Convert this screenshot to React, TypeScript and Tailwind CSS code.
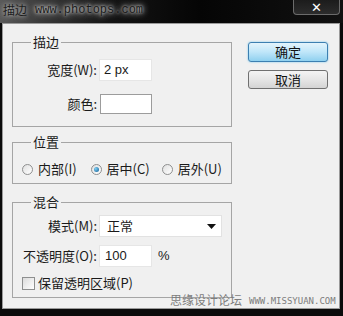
import React from "react";

const cn = '"Noto Sans CJK SC", "Liberation Sans", sans-serif';

function Radio({ checked, label }: { checked?: boolean; label: string }) {
  return (
    <div className="flex items-center gap-[5px]">
      <div className="w-[11px] h-[11px] rounded-full border border-[#8e8f8f] bg-gradient-to-br from-[#e0e0e0] to-[#ffffff] flex items-center justify-center">
        {checked && <div className="w-[5px] h-[5px] rounded-full bg-[radial-gradient(circle_at_35%_35%,#7fd0f5,#0f5a91)]" />}
      </div>
      <span className="text-[13px] leading-[16px] text-[#1a1a1a]">{label}</span>
    </div>
  );
}

export default function App() {
  return (
    <div
      className="relative w-[343px] h-[316px] overflow-hidden bg-[#0b0b0b] flex flex-col"
      style={{ fontFamily: cn }}
    >
      {/* title bar */}
      <div className="h-[23px] flex items-start bg-[linear-gradient(90deg,#5a5a5a_0px,#3a3a3a_40px,#141414_110px,#050505_200px,#111_343px)]">
        <span
          className="ml-[3px] mt-[3px] text-[12px] leading-[14px] text-[#1d1d1d]"
          style={{ textShadow: "0 0 4px #bbb, 0 0 6px #999" }}
        >
          描边
        </span>
        <span
          className="ml-[8px] mt-[3px] text-[12px] leading-[14px] text-[#1a1a1a]"
          style={{ fontFamily: '"Liberation Mono", monospace', textShadow: "0 0 3px #ddd, 0 0 6px #bbb, 0 0 8px #999" }}
        >
          www.photops.com
        </span>
        <div className="ml-auto mr-[3px] w-[47px] h-[15px] rounded-b-[4px] border border-t-0 border-[#6b6b6b] bg-gradient-to-b from-[#1c1c1c] to-[#2c2c2c] flex items-center justify-center">
          <span className="text-white text-[13px] font-bold leading-none" style={{ fontFamily: '"DejaVu Sans", sans-serif' }}>
            ✕
          </span>
        </div>
      </div>

      {/* panel */}
      <div className="ml-[2px] mr-[3px] h-[286px] bg-[#f0f0f0] border border-[#9a9a9a] flex pl-[9px] pt-[10px]">
        <div className="w-[220px] flex flex-col">
          {/* 描边 */}
          <fieldset className="border border-[#a5a5a5] px-0 pb-[12px] pt-[9px]">
            <legend className="ml-[18px] px-[2px] text-[13px] leading-[16px] text-[#1a1a1a]">描边</legend>
            <div className="flex flex-col">
              <div className="flex items-center h-[22px]">
                <span className="w-[84px] text-right text-[13px] text-[#1a1a1a]">宽度(W):</span>
                <div className="ml-[2px] w-[53px] h-[22px] bg-white border border-[#e6e6e6] flex items-center pl-[4px] text-[13px] text-[#1a1a1a]" style={{ fontFamily: '"Liberation Sans", sans-serif' }}>
                  2 px
                </div>
              </div>
              <div className="flex items-center h-[20px] mt-[13px]">
                <span className="w-[84px] text-right text-[13px] text-[#1a1a1a]">颜色:</span>
                <div className="ml-[3px] w-[52px] h-[20px] bg-white border border-[#9c9c9c]" />
              </div>
            </div>
          </fieldset>

          {/* 位置 */}
          <fieldset className="mt-[7px] border border-[#a5a5a5] pt-[10px] pb-[5px]">
            <legend className="ml-[18px] px-[2px] text-[13px] leading-[16px] text-[#1a1a1a]">位置</legend>
            <div className="flex items-center h-[18px] pl-[9px]">
              <Radio label="内部(I)" />
              <div className="w-[14px]" />
              <Radio checked label="居中(C)" />
              <div className="w-[12px]" />
              <Radio label="居外(U)" />
            </div>
          </fieldset>

          {/* 混合 */}
          <fieldset className="mt-[10px] border border-[#a5a5a5] pt-[5px] pb-[7px]">
            <legend className="ml-[18px] px-[2px] text-[13px] leading-[16px] text-[#1a1a1a]">混合</legend>
            <div className="flex flex-col">
              <div className="flex items-center h-[22px]">
                <span className="w-[84px] text-right text-[13px] text-[#1a1a1a]">模式(M):</span>
                <div className="ml-[2px] w-[123px] h-[22px] bg-white border border-[#e2e2e2] flex items-center pl-[7px] pr-[5px] text-[13px] text-[#1a1a1a]">
                  正常
                  <svg className="ml-auto" width="9" height="5" viewBox="0 0 9 5">
                    <path d="M0 0 H9 L4.5 5 Z" fill="#111" />
                  </svg>
                </div>
              </div>
              <div className="flex items-center h-[22px] mt-[8px]">
                <span className="w-[84px] text-right text-[13px] text-[#1a1a1a] whitespace-nowrap">不透明度(O):</span>
                <div className="ml-[2px] w-[53px] h-[22px] bg-white border border-[#e6e6e6] flex items-center pl-[5px] text-[13px] text-[#1a1a1a]" style={{ fontFamily: '"Liberation Sans", sans-serif' }}>
                  100
                </div>
                <span className="ml-[6px] text-[13px] text-[#1a1a1a]" style={{ fontFamily: '"Liberation Sans", sans-serif' }}>%</span>
              </div>
              <div className="flex items-center h-[14px] mt-[9px] pl-[9px]">
                <div className="w-[13px] h-[13px] border border-[#8e8f8f] bg-gradient-to-br from-[#dcdcdc] to-[#ffffff]" />
                <span className="ml-[3px] text-[13px] leading-[16px] text-[#1a1a1a]">保留透明区域(P)</span>
              </div>
            </div>
          </fieldset>
        </div>

        {/* buttons */}
        <div className="ml-[16px] pt-[8px] flex flex-col gap-[8px]">
          <div className="w-[80px] h-[20px] rounded-[3px] border border-[#3c7fb1] bg-gradient-to-b from-[#e3f4fc] via-[#bfe6f9] to-[#8fd0ef] flex items-center justify-center text-[13px] text-[#111] shadow-[0_0_2px_#6ac4ee]">
            确定
          </div>
          <div className="w-[80px] h-[19px] rounded-[3px] border border-[#707070] bg-gradient-to-b from-[#f4f4f4] via-[#e6e6e6] to-[#d4d4d4] flex items-center justify-center text-[13px] text-[#111]">
            取消
          </div>
        </div>
      </div>

      {/* watermark */}
      <div className="absolute left-[170px] top-[293px] flex items-start">
        <span className="text-[12px] leading-[14px] text-[#7d7d7d]">思缘设计论坛</span>
        <span
          className="ml-[7px] mt-[3px] text-[9px] leading-[10px] text-[#7d7d7d]"
          style={{ fontFamily: '"DejaVu Sans Mono", monospace' }}
        >
          WWW.MISSYUAN.COM
        </span>
      </div>
    </div>
  );
}
